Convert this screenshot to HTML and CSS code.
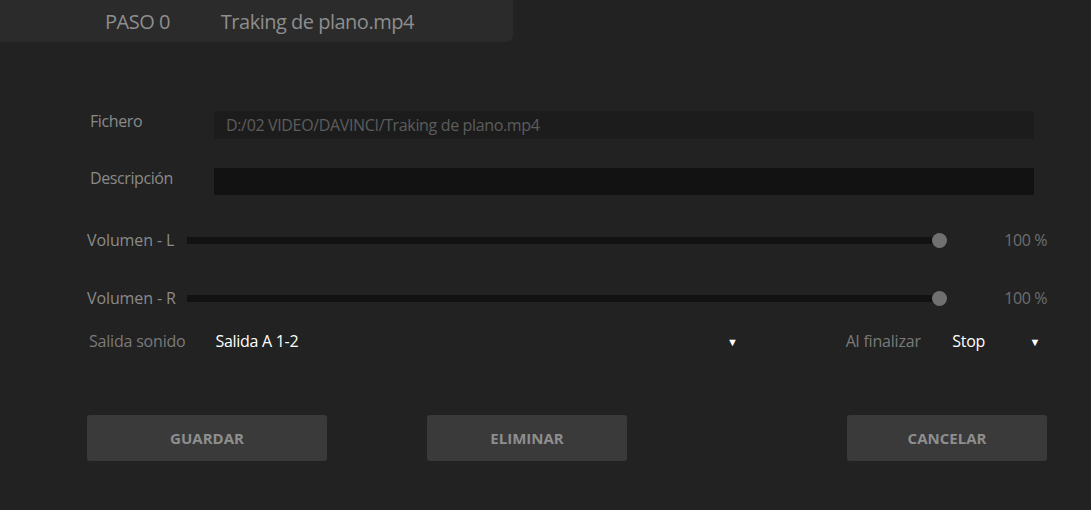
FILE: index.html
```html
<!DOCTYPE html>
<html lang="es">
<head>
<meta charset="utf-8">
<title>Paso 0</title>
<link rel="stylesheet" href="styles.css">
</head>
<body>
<header class="tab">
  <span class="tab-step">PASO 0</span>
  <span class="tab-name">Traking de plano.mp4</span>
</header>
<main class="form">
  <div class="field field-file">
    <label class="label">Fichero</label>
    <div class="input input-file">D:/02 VIDEO/DAVINCI/Traking de plano.mp4</div>
  </div>
  <div class="field field-desc">
    <label class="label">Descripción</label>
    <div class="input input-desc"></div>
  </div>
  <div class="volume volume-l">
    <span class="vlabel">Volumen - L</span>
    <div class="track"><span class="thumb"></span></div>
    <span class="pct">100 %</span>
  </div>
  <div class="volume volume-r">
    <span class="vlabel">Volumen - R</span>
    <div class="track"><span class="thumb"></span></div>
    <span class="pct">100 %</span>
  </div>
  <div class="selects">
    <span class="slabel">Salida sonido</span>
    <div class="select select-out"><span>Salida A 1-2</span><span class="arrow">▼</span></div>
    <span class="slabel slabel-end">Al finalizar</span>
    <div class="select select-end"><span>Stop</span><span class="arrow">▼</span></div>
  </div>
  <div class="buttons">
    <button class="btn btn-save">GUARDAR</button>
    <button class="btn btn-del">ELIMINAR</button>
    <button class="btn btn-cancel">CANCELAR</button>
  </div>
</main>
</body>
</html>
```
FILE: styles.css
```css
html, body {
  margin: 0;
  padding: 0;
  background: #222222;
  font-family: "Open Sans", "Noto Sans", sans-serif;
  color: #8c8c8c;
}
body {
  width: 1091px;
  height: 510px;
  overflow: hidden;
}
.tab {
  width: 513px;
  height: 42px;
  box-sizing: border-box;
  background: #2b2b2b;
  border-bottom-right-radius: 7px;
  display: flex;
  align-items: center;
  padding-left: 105px;
  font-size: 20px;
  letter-spacing: -0.5px;
  color: #8e8e8e;
}
.tab-name {
  margin-left: 51px;
}
.form {
  padding: 0 44px 0 87px;
  display: flex;
  flex-direction: column;
}
.field {
  display: flex;
  align-items: flex-start;
}
.field-file {
  margin-top: 69px;
}
.field-desc {
  margin-top: 29px;
}
.label {
  width: 124px;
  padding-left: 3px;
  font-size: 16px;
  letter-spacing: -0.4px;
  line-height: 20px;
  color: #8a8a8a;
}
.input {
  width: 820px;
  box-sizing: border-box;
  padding-left: 12px;
  font-size: 16px;
  letter-spacing: -0.35px;
  color: #5c5c5c;
  line-height: 28px;
}
.input-file {
  height: 28px;
  background: #1c1c1c;
}
.input-desc {
  height: 27px;
  background: #121212;
}
.volume {
  display: flex;
  align-items: center;
  height: 16px;
}
.volume-l {
  margin-top: 37px;
}
.volume-r {
  margin-top: 42px;
}
.vlabel {
  width: 100px;
  font-size: 16px;
  letter-spacing: -0.1px;
  color: #8a8a8a;
}
.track {
  position: relative;
  width: 753px;
  height: 7px;
  background: #121212;
}
.thumb {
  position: absolute;
  right: -7px;
  top: 50%;
  width: 15px;
  height: 15px;
  margin-top: -7.5px;
  border-radius: 50%;
  background: #707070;
}
.pct {
  margin-left: auto;
  font-size: 16px;
  letter-spacing: -0.4px;
  color: #6e6e6e;
}
.selects {
  display: flex;
  align-items: center;
  margin-top: 25px;
  height: 20px;
}
.slabel {
  width: 127px;
  padding-left: 2px;
  box-sizing: border-box;
  font-size: 16px;
  letter-spacing: -0.2px;
  color: #7a7a7a;
}
.select {
  display: flex;
  align-items: center;
  justify-content: space-between;
  font-size: 16px;
  letter-spacing: -0.3px;
  color: #ffffff;
  padding-left: 2px;
}
.select-out {
  width: 524px;
}
.slabel-end {
  margin-left: 108px;
  width: 105px;
  padding-left: 0;
}
.select-end {
  width: 88px;
  margin-left: auto;
  margin-right: 7px;
}
.arrow {
  font-size: 11px;
  color: #ffffff;
}
.buttons {
  display: flex;
  margin-top: 64px;
  gap: 100px;
}
.btn {
  height: 46px;
  width: 200px;
  border: none;
  border-radius: 3px;
  background: #3a3a3a;
  color: #8e8e8e;
  font-family: "Open Sans", "Noto Sans", sans-serif;
  font-weight: 700;
  font-size: 15px;
  letter-spacing: 0;
  padding: 0;
}
.btn-save {
  width: 240px;
}
.btn-cancel {
  margin-left: auto;
}
```
